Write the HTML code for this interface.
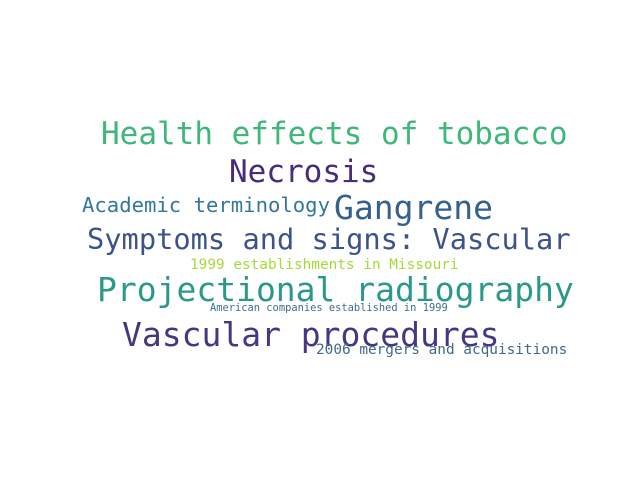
<!DOCTYPE html>
<html><head><meta charset="utf-8"><style>
html,body{margin:0;padding:0;background:#fff;width:640px;height:480px;overflow:hidden}
div{position:absolute;font-family:"DejaVu Sans Mono","Liberation Mono",monospace;line-height:1;white-space:nowrap}
</style></head><body>
<div style="left:101px;top:119px;font-size:31px;color:#40b77a">Health effects of tobacco</div>
<div style="left:229px;top:157px;font-size:31px;color:#472c7a">Necrosis</div>
<div style="left:82px;top:195px;font-size:20.6px;color:#33789a">Academic terminology</div>
<div style="left:334px;top:191px;font-size:33px;color:#34618d">Gangrene</div>
<div style="left:87px;top:225px;font-size:28.7px;color:#3b528b">Symptoms and signs: Vascular</div>
<div style="left:190px;top:258px;font-size:14.4px;color:#a5db36">1999 establishments in Missouri</div>
<div style="left:97px;top:273px;font-size:33px;color:#2a988b">Projectional radiography</div>
<div style="left:210px;top:303px;font-size:10.4px;color:#3e6f8e">American companies established in 1999</div>
<div style="left:122px;top:318px;font-size:33px;color:#453781">Vascular procedures</div>
<div style="left:316px;top:343px;font-size:14.4px;color:#3f6a8a">2006 mergers and acquisitions</div>
</body></html>
